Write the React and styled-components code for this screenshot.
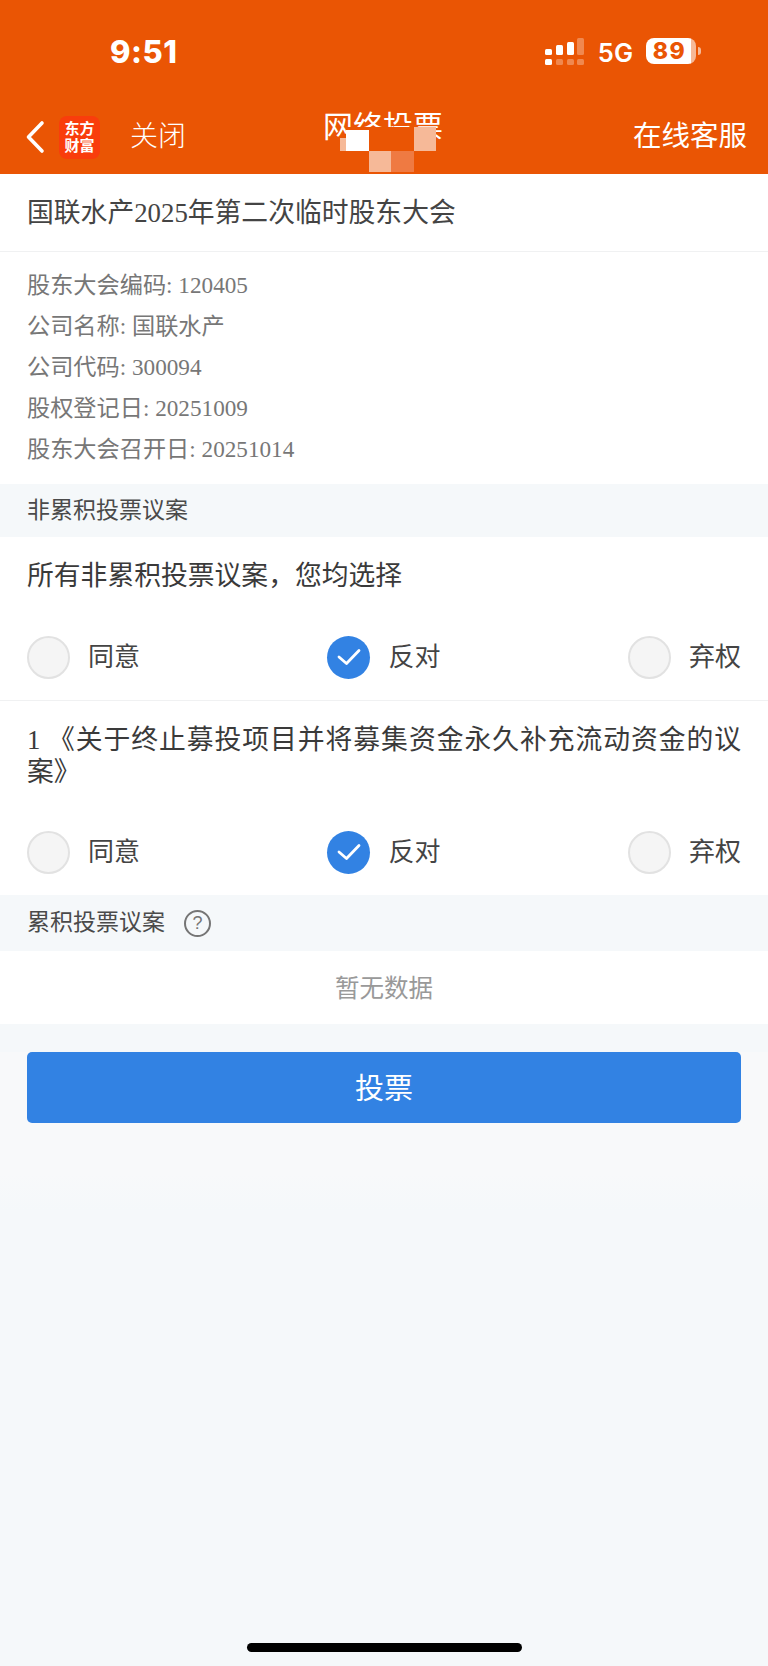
import React from "react";
import styled, { createGlobalStyle } from "styled-components";

const GlobalStyle = createGlobalStyle`
  html, body {
    margin: 0;
    padding: 0;
    background: #f5f8fa;
  }
  * {
    box-sizing: border-box;
  }
`;

const SERIF = `"Liberation Serif", "Noto Sans CJK SC", serif`;
const SANS = `"Liberation Sans", "Noto Sans CJK SC", sans-serif`;

const Page = styled.div`
  width: 768px;
  height: 1666px;
  overflow: hidden;
  display: flex;
  flex-direction: column;
  background: #f5f8fa;
  font-family: ${SERIF};
`;

const Header = styled.header`
  background: #ea5504;
  height: 174px;
  color: #fff;
  font-family: ${SANS};
`;

const StatusBar = styled.div`
  height: 100px;
  padding: 35px 72px 0 110px;
  display: flex;
  justify-content: space-between;
  align-items: flex-start;
`;

const Clock = styled.span`
  font-family: Inter, sans-serif;
  font-size: 31px;
  line-height: 34px;
  font-weight: 800;
  letter-spacing: 0.5px;
`;

const StatusIcons = styled.div`
  display: flex;
  align-items: center;
  height: 32px;
`;

const Network = styled.span`
  font-family: Inter, sans-serif;
  font-size: 25.5px;
  font-weight: 600;
  margin-left: 13px;
  margin-right: 13px;
  padding-top: 2px;
`;

const Battery = styled.div`
  position: relative;
  width: 50px;
  height: 26px;
  border-radius: 8px;
  background: linear-gradient(90deg, #fff 0 89%, #f6b998 89%);
  color: #ea5504;
  font-family: Inter, sans-serif;
  font-size: 23px;
  font-weight: 800;
  line-height: 26px;
  letter-spacing: 1.5px;
  text-align: center;
  padding-right: 3px;

  &::after {
    content: "";
    position: absolute;
    left: 52px;
    top: 9px;
    width: 3px;
    height: 8px;
    border-radius: 0 3px 3px 0;
    background: #f6b998;
  }
`;

const NavBar = styled.div`
  height: 74px;
  padding: 0 21px 0 25px;
  display: grid;
  grid-template-columns: 1fr auto 1fr;
  align-items: center;
`;

const NavLeft = styled.div`
  display: flex;
  align-items: center;
`;

const Logo = styled.div`
  width: 41px;
  height: 43px;
  margin-left: 14px;
  border-radius: 8px;
  background: #f93d0c;
  display: flex;
  align-items: center;
  justify-content: center;
  text-align: center;
  font-size: 15px;
  line-height: 17px;
  font-weight: 700;
`;

const CloseText = styled.span`
  font-size: 28px;
  margin-left: 30px;
  padding-bottom: 6px;
  font-weight: 300;
`;

const TitleWrap = styled.div`
  position: relative;
  font-size: 30px;
  line-height: 34px;
  font-weight: 400;
  margin: 0 6px 21px 0;
`;

const Mosaic = styled.div`
  position: absolute;
  left: 17px;
  top: 17px;
  display: grid;
  grid-template-columns: 6px repeat(4, 22.5px);
  grid-template-rows: 24px 21px;
`;

const MosaicCell = styled.div`
  background: ${(p) => p.$color};
`;

const NavRight = styled.div`
  justify-self: end;
  font-size: 28.5px;
  font-weight: 400;
  padding-bottom: 8px;
`;

const TitleRow = styled.div`
  height: 78px;
  background: #fff;
  border-bottom: 1px solid #f0f1f2;
  padding: 0 27px 4px;
  display: flex;
  align-items: center;
  font-size: 26.8px;
  color: #444;
`;

const InfoList = styled.div`
  background: #fff;
  padding: 13px 27px 14px;
`;

const InfoLine = styled.div`
  font-size: 23.2px;
  line-height: 41px;
  color: #777;
`;

const SectionHeader = styled.div`
  height: ${(p) => p.$height}px;
  padding: 0 27px 6px;
  display: flex;
  align-items: center;
  gap: 19px;
  font-size: 23px;
  color: #4a4a4a;
  background: #f5f8fa;
`;

const HelpMark = styled.span`
  width: 27px;
  height: 27px;
  margin-top: 6px;
  border: 2px solid #757575;
  border-radius: 50%;
  color: #757575;
  font-family: ${SANS};
  font-size: 18px;
  line-height: 23px;
  text-align: center;
`;

const Block = styled.section`
  background: #fff;
  border-bottom: ${(p) => (p.$divider ? "1px solid #f0f1f2" : "none")};
`;

const Question = styled.div`
  padding: 23px 27px ${(p) => p.$bottom}px;
  font-size: 26.8px;
  line-height: 32px;
  color: #3a3a3a;
  text-align: justify;
  text-spacing-trim: space-all;
  font-kerning: none;
`;

const OptionRow = styled.div`
  height: 86px;
  padding: 0 27px;
  display: flex;
  justify-content: space-between;
  align-items: center;
`;

const Option = styled.div`
  display: flex;
  align-items: center;
  gap: 18px;
  font-size: 26px;
  color: #444;
`;

const OptionLabel = styled.span`
  padding-bottom: 6px;
`;

const Radio = styled.div`
  width: 43px;
  height: 43px;
  border-radius: 50%;
  display: flex;
  align-items: center;
  justify-content: center;
  background: ${(p) => (p.$checked ? "#3282e3" : "#f5f5f5")};
  border: ${(p) => (p.$checked ? "none" : "2px solid #e2e2e2")};
`;

const Empty = styled.div`
  height: 73px;
  padding-bottom: 3px;
  background: #fff;
  display: flex;
  align-items: center;
  justify-content: center;
  font-size: 24.5px;
  color: #999;
`;

const VoteArea = styled.div`
  padding: 28px 27px 88px;
  background: linear-gradient(#f5f8fa 0 28px, #f8f9fa 28px 150px, #f5f8fa 187px);
`;

const VoteButton = styled.button`
  display: block;
  width: 100%;
  height: 71px;
  border: none;
  border-radius: 5px;
  background: #3282e3;
  color: #fff;
  font-family: ${SERIF};
  font-size: 29px;
  padding: 0 0 3px;
`;

const HomeBar = styled.div`
  width: 275px;
  height: 9px;
  margin: auto auto 14px 247px;
  border-radius: 5px;
  background: #000;
`;

const SignalIcon = () => (
  <svg width="40" height="27" viewBox="0 0 40 27" fill="#fff">
    <rect x="0" y="11" width="7" height="6" rx="1.5" />
    <rect x="11" y="7" width="7" height="10" rx="1.5" />
    <rect x="22" y="4" width="7" height="13" rx="1.5" />
    <rect x="32" y="0" width="7" height="17" rx="1.5" opacity="0.3" />
    <rect x="0" y="21" width="7" height="6" rx="1.5" />
    <rect x="11" y="21" width="7" height="6" rx="1.5" opacity="0.3" />
    <rect x="22" y="21" width="7" height="6" rx="1.5" opacity="0.3" />
    <rect x="32" y="21" width="7" height="6" rx="1.5" opacity="0.3" />
  </svg>
);

const BackIcon = () => (
  <svg width="20" height="34" viewBox="0 0 20 34" fill="none">
    <path d="M17 3 L3.5 17 L17 31" stroke="#fff" strokeWidth="3.6" strokeLinecap="round" strokeLinejoin="round" />
  </svg>
);

const CheckIcon = () => (
  <svg width="26" height="20" viewBox="0 0 26 20" fill="none">
    <path d="M3 10 L10.5 16.5 L23 3.5" stroke="#fff" strokeWidth="2.8" strokeLinecap="round" strokeLinejoin="round" />
  </svg>
);

const ORANGE = "#ea5504";
const LIGHT = "#f6b998";
const mosaicColors = [
  `linear-gradient(transparent 0 11px, ${LIGHT} 11px)`,
  `linear-gradient(${ORANGE} 0 3px, #fff 3px)`,
  ORANGE,
  ORANGE,
  LIGHT,
  "transparent",
  ORANGE,
  LIGHT,
  "#ef7a42",
  ORANGE,
];
const infoLines = [
  "股东大会编码: 120405",
  "公司名称: 国联水产",
  "公司代码: 300094",
  "股权登记日: 20251009",
  "股东大会召开日: 20251014",
];
const choices = ["同意", "反对", "弃权"];

const Options = () => (
  <OptionRow>
    {choices.map((c) => (
      <Option key={c}>
        <Radio $checked={c === "反对"}>{c === "反对" && <CheckIcon />}</Radio>
        <OptionLabel>{c}</OptionLabel>
      </Option>
    ))}
  </OptionRow>
);

export default function App() {
  return (
    <Page>
      <GlobalStyle />
      <Header>
        <StatusBar>
          <Clock>9:51</Clock>
          <StatusIcons>
            <SignalIcon />
            <Network>5G</Network>
            <Battery>89</Battery>
          </StatusIcons>
        </StatusBar>
        <NavBar>
          <NavLeft>
            <BackIcon />
            <Logo>
              东方
              <br />
              财富
            </Logo>
            <CloseText>关闭</CloseText>
          </NavLeft>
          <TitleWrap>
            网络投票
            <Mosaic>
              {mosaicColors.map((c, i) => (
                <MosaicCell key={i} $color={c} />
              ))}
            </Mosaic>
          </TitleWrap>
          <NavRight>在线客服</NavRight>
        </NavBar>
      </Header>

      <TitleRow>国联水产2025年第二次临时股东大会</TitleRow>
      <InfoList>
        {infoLines.map((l) => (
          <InfoLine key={l}>{l}</InfoLine>
        ))}
      </InfoList>

      <SectionHeader $height={53}>非累积投票议案</SectionHeader>
      <Block $divider>
        <Question $bottom={22}>所有非累积投票议案，您均选择</Question>
        <Options />
      </Block>
      <Block>
        <Question $bottom={21}>1 《关于终止募投项目并将募集资金永久补充流动资金的议案》</Question>
        <Options />
      </Block>

      <SectionHeader $height={56}>
        累积投票议案
        <HelpMark>?</HelpMark>
      </SectionHeader>
      <Empty>暂无数据</Empty>

      <VoteArea>
        <VoteButton>投票</VoteButton>
      </VoteArea>
      <HomeBar />
    </Page>
  );
}
